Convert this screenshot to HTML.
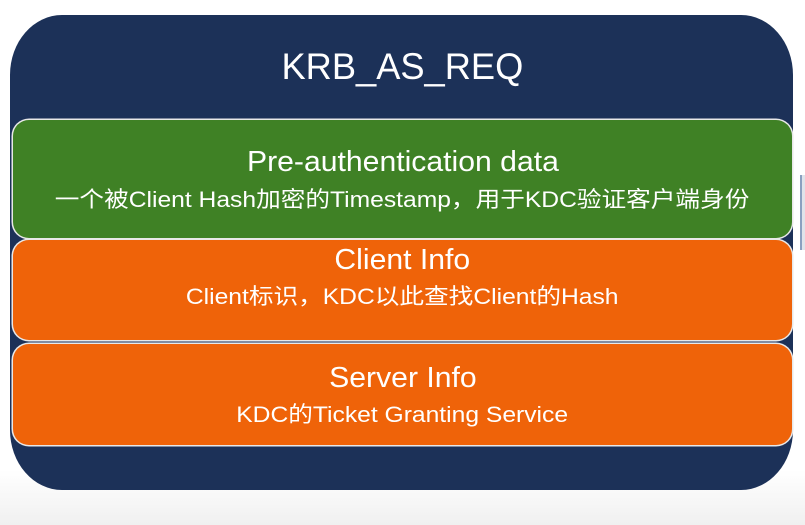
<!DOCTYPE html>
<html><head><meta charset="utf-8"><style>
html,body{margin:0;padding:0;}
body{width:805px;height:525px;position:relative;overflow:hidden;background:linear-gradient(#fff 0,#fff 470px,#f0f0f0 525px);font-family:"Liberation Sans","Noto Sans CJK SC",sans-serif;color:#fff;}
.outer{position:absolute;left:10px;top:15px;width:783px;height:475px;background:#1c3158;border-radius:52px/60px;}
.box{position:absolute;left:13px;width:779px;border-radius:16px;box-shadow:0 0 0 1.5px #e8e8e8;}
.t{position:absolute;left:0;width:100%;text-align:center;white-space:nowrap;}
.t span{display:inline-block;transform:scaleX(1.04);}
.s span{display:inline-block;transform:scaleX(1.12);}
</style></head><body>
<div class="outer"></div>
<div style="position:absolute;left:800px;top:175px;width:5px;height:75px;background:#dfe3ea;border-left:2px solid #8aa0c0"></div>
<div class="t" style="top:46px;font-size:37px;"><span style="transform:scaleX(0.98)">KRB_AS_REQ</span></div>
<div class="box" style="top:120px;height:118px;background:#3f8125;"></div>
<div class="box" style="top:240px;height:100px;background:#ef6309;"></div>
<div class="box" style="top:344px;height:101px;background:#ef6309;"></div>
<div class="t" style="top:146px;font-size:29px;"><span>Pre-authentication data</span></div>
<div class="t s" style="top:182px;font-size:22px;"><span>一个被Client Hash加密的Timestamp，用于KDC验证客户端身份</span></div>
<div class="t" style="top:244px;font-size:29px;"><span>Client Info</span></div>
<div class="t s" style="top:279px;font-size:22px;"><span>Client标识，KDC以此查找Client的Hash</span></div>
<div class="t" style="top:362px;font-size:29px;"><span>Server Info</span></div>
<div class="t s" style="top:397px;font-size:22px;"><span>KDC的Ticket Granting Service</span></div>
</body></html>
